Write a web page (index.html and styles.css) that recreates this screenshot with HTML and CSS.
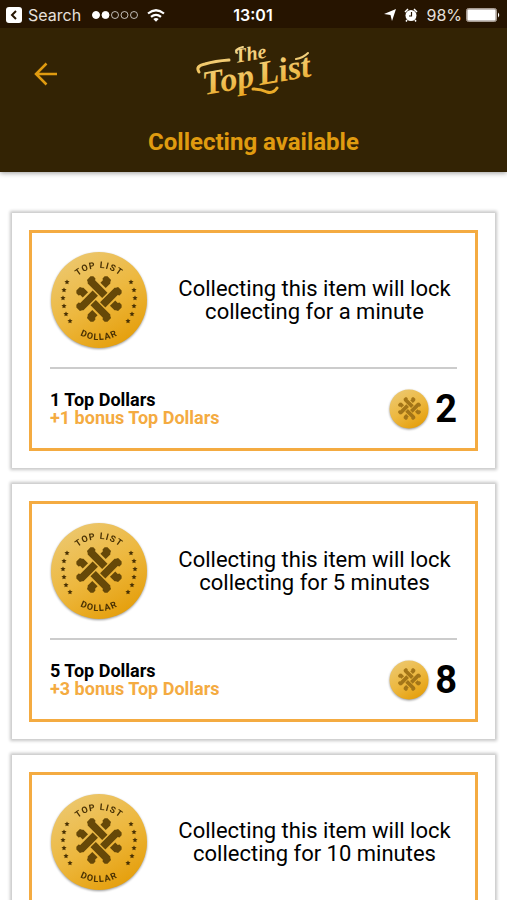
FILE: index.html
```html
<!DOCTYPE html>
<html lang="en">
<head>
    <meta charset="UTF-8">
    <meta name="viewport" content="width=device-width, initial-scale=1.0">
    <title>The Top List</title>
    <link rel="stylesheet" href="styles.css">
</head>
<body>
<!-- Shared coin artwork -->
<svg class="defs" width="0" height="0" aria-hidden="true">
    <defs>
        <linearGradient id="gold" x1="0.2" y1="0" x2="0.8" y2="1">
            <stop offset="0" stop-color="#ecc870"/>
            <stop offset="0.5" stop-color="#edb83f"/>
            <stop offset="1" stop-color="#e49c06"/>
        </linearGradient>
        <!-- One bar of the woven knot: long piece, gap, short end -->
        <path id="arm" d="M-22 -10 L-20 -12 L-17 -12 L-16 -10.500 H1.500 V-3 H-19 L-20 -4 L-22 -5 Z M12.500 -10.500 H16 L17 -12 L20 -12 L22 -10 L22 -5 L20 -4 L19 -3 H12.500 Z"/>
        <symbol id="knot" viewBox="-25 -25 50 50">
            <g transform="rotate(-45)">
                <use href="#arm"/>
                <use href="#arm" transform="rotate(90)"/>
                <use href="#arm" transform="rotate(180)"/>
                <use href="#arm" transform="rotate(270)"/>
            </g>
        </symbol>
        <path id="star" d="M0 -2.600 L0.800 -0.900 L2.600 -0.800 L1.200 0.500 L1.600 2.300 L0 1.400 L-1.600 2.300 L-1.200 0.500 L-2.600 -0.800 L-0.800 -0.900 Z"/>
        <path id="arc-top" d="M17 49 A32 32 0 0 1 81 49"/>
        <path id="arc-bottom" d="M9 49 A40 40 0 0 0 89 49"/>
        <symbol id="coin" viewBox="0 0 98 98">
            <circle cx="49" cy="49" r="48" fill="url(#gold)"/>
            <use href="#knot" x="24" y="23" width="50" height="50" fill="#664808"/>
            <text class="coin-text"><textPath href="#arc-top" startOffset="50%">TOP LIST</textPath></text>
            <text class="coin-text"><textPath href="#arc-bottom" startOffset="50%">DOLLAR</textPath></text>
            <g fill="#4a3204">
                <use href="#star" x="17" y="31"/><use href="#star" x="14" y="39"/><use href="#star" x="13" y="47"/>
                <use href="#star" x="14" y="55"/><use href="#star" x="16" y="63"/><use href="#star" x="20" y="70"/>
                <use href="#star" x="81" y="31"/><use href="#star" x="84" y="39"/><use href="#star" x="85" y="47"/>
                <use href="#star" x="84" y="55"/><use href="#star" x="82" y="63"/><use href="#star" x="78" y="70"/>
            </g>
        </symbol>
        <symbol id="coin-small" viewBox="0 0 40 40">
            <circle cx="20" cy="20" r="19.500" fill="url(#gold)"/>
            <use href="#knot" x="8" y="7" width="25" height="25" fill="#a37518"/>
        </symbol>
    </defs>
</svg>

<header class="header">
    <div class="status-bar">
        <div class="status-left">
            <svg width="16" height="16" viewBox="0 0 16 16"><rect width="16" height="16" rx="3" fill="#fff"/><path d="M10 4 L6 8 L10 12" fill="none" stroke="#261400" stroke-width="2"/></svg>
            <span>Search</span>
            <svg class="signal" width="46" height="8" viewBox="0 0 46 8" fill="none" stroke="#fff"><circle cx="4" cy="4" r="3.500" fill="#fff"/><circle cx="13.500" cy="4" r="3.500" fill="#fff"/><circle cx="23" cy="4" r="3.500" opacity=".7"/><circle cx="32.500" cy="4" r="3.500" opacity=".7"/><circle cx="42" cy="4" r="3.500" opacity=".7"/></svg>
            <svg width="18" height="13" viewBox="0 0 18 13" fill="none" stroke="#fff" stroke-width="2.200"><path d="M1 4.500 Q9 -2 17 4.500"/><path d="M4 7.900 Q9 3.700 14 7.900"/><path d="M6.300 10 Q9 8 11.700 10 L9 12.800 Z" fill="#fff" stroke="none"/></svg>
        </div>
        <span class="time">13:01</span>
        <div class="status-right">
            <svg width="12" height="12" viewBox="0 0 12 12" fill="#fff"><path d="M12 0 L8 12 L6.500 6 L0 5 Z"/></svg>
            <svg class="alarm" width="14" height="14" viewBox="0 0 14 14"><circle cx="7" cy="7.500" r="5.500" fill="#fff"/><path d="M1 4 L4 1 M10 1 L13 4 M3 12 L2 13.500 M11 12 L12 13.500" stroke="#fff" stroke-width="1.500"/><path d="M7.500 4 V8 H5" fill="none" stroke="#261400" stroke-width="1.200"/></svg>
            <span class="percent">98%</span>
            <svg width="34" height="14" viewBox="0 0 34 14"><rect x="0.500" y="0.500" width="30" height="13" rx="2" fill="#8d8078" stroke="#a89c92"/><rect x="1.500" y="1.500" width="28" height="11" rx="1" fill="#fff"/><path d="M32 4.500 Q34.500 7 32 9.500 Z" fill="#fff"/></svg>
        </div>
    </div>
    <nav class="nav">
        <a class="back" href="#" aria-label="Back">
            <svg width="24" height="24" viewBox="0 0 24 24" fill="none" stroke="#e09b10" stroke-width="2.500"><path d="M23 12 H2 M12.500 1.500 L2 12 L12.500 22.500"/></svg>
        </a>
        <svg class="logo" width="118" height="60" viewBox="0 0 118 60" role="img" aria-label="The Top List">
            <defs>
                <linearGradient id="logo-gold" gradientUnits="userSpaceOnUse" x1="0" y1="4" x2="0" y2="56">
                    <stop offset="0" stop-color="#f5d78e"/>
                    <stop offset="0.600" stop-color="#f0c25a"/>
                    <stop offset="1" stop-color="#e9a31a"/>
                </linearGradient>
            </defs>
            <g fill="url(#logo-gold)" transform="rotate(-10 59 30)">
                <text class="logo-the" x="42" y="20">The</text>
                <text class="logo-top" x="6" y="46">Top</text>
                <text class="logo-top" x="62" y="46">List</text>
            </g>
            <!-- Swashes -->
            <g fill="none" stroke="url(#logo-gold)" stroke-width="3" stroke-linecap="round">
                <path d="M4 32 Q0 26 10 24 Q20 21 34 20"/>
                <path d="M42 13 Q39 9 48 7" stroke-width="2"/>
                <path d="M58 49 Q66 49 72 52 Q78 54 82 48"/>
                <path d="M101 19 Q108 18 113 13" stroke-width="2"/>
            </g>
        </svg>
    </nav>
    <h1>Collecting available</h1>
</header>

<main class="list">
    <article class="card">
        <div class="card-inner">
            <div class="info">
                <svg class="coin"><use href="#coin"/></svg>
                <p>Collecting this item will lock collecting for a minute</p>
            </div>
            <div class="summary">
                <div class="reward">
                    <div>1 Top Dollars</div>
                    <div class="bonus">+1 bonus Top Dollars</div>
                </div>
                <div class="total">
                    <svg class="coin-small"><use href="#coin-small"/></svg>
                    <span>2</span>
                </div>
            </div>
        </div>
    </article>

    <article class="card">
        <div class="card-inner">
            <div class="info">
                <svg class="coin"><use href="#coin"/></svg>
                <p>Collecting this item will lock collecting for 5 minutes</p>
            </div>
            <div class="summary">
                <div class="reward">
                    <div>5 Top Dollars</div>
                    <div class="bonus">+3 bonus Top Dollars</div>
                </div>
                <div class="total">
                    <svg class="coin-small"><use href="#coin-small"/></svg>
                    <span>8</span>
                </div>
            </div>
        </div>
    </article>

    <article class="card">
        <div class="card-inner">
            <div class="info">
                <svg class="coin"><use href="#coin"/></svg>
                <p>Collecting this item will lock collecting for 10 minutes</p>
            </div>
        </div>
    </article>
</main>
</body>
</html>
```
FILE: styles.css
```css
:root {
    --gold: #e09b10;
    --orange: #f4ab41;
    --header-bg: #332304;
    --status-bg: #261400;
}

* {
    box-sizing: border-box;
}

body {
    margin: 0;
    font-family: Roboto, sans-serif;
    color: #000;
    background: #fff;
}

.defs {
    position: absolute;
}

/* Header */
.header {
    padding-bottom: 15px;
    background: var(--header-bg);
    box-shadow: 0 1px 5px rgba(0, 0, 0, 0.4);
}

.status-bar {
    display: grid;
    grid-template-columns: 1fr auto 1fr;
    align-items: center;
    height: 28px;
    padding: 2px 7px 0 6px;
    background: var(--status-bg);
    color: #e6e0dc;
    font-family: Inter, sans-serif;
    font-size: 16px;
}

.status-left, .status-right {
    display: flex;
    align-items: center;
    gap: 6px;
}

.status-right {
    justify-content: flex-end;
}

.alarm {
    margin: 0 2px;
}

.percent {
    margin-right: -2px;
}

.signal {
    margin: 0 3px 0 5px;
}

.time {
    font-weight: 600;
    color: #fff;
}

.nav {
    position: relative;
    display: flex;
    justify-content: center;
    padding-top: 12px;
}

.back {
    position: absolute;
    left: 34px;
    top: 34px;
}

.back svg, .logo {
    display: block;
}

.logo text {
    font-family: "Liberation Serif", serif;
    font-style: italic;
    font-weight: 700;
}

.logo .logo-the {
    font-size: 20px;
}

.logo .logo-top {
    font-size: 34px;
}

h1 {
    margin: 28px 0 0;
    text-align: center;
    font-size: 24px;
    line-height: 29px;
    font-weight: 700;
    color: var(--gold);
}

/* Cards */
.list {
    display: flex;
    flex-direction: column;
    gap: 16px;
    padding: 41px 12px 0;
}

.card {
    padding: 17px;
    background: #fff;
    box-shadow: 0 0 3px 2px rgba(0, 0, 0, 0.22);
}

.card-inner {
    padding: 18px;
    border: 3px solid var(--orange);
}

.info {
    display: flex;
    align-items: center;
    gap: 24px;
    padding-bottom: 18px;
    border-bottom: 2px solid #ccc;
}

.info p {
    flex: 1;
    margin: 0;
    text-align: center;
    font-size: 22px;
    line-height: 23px;
}

.coin {
    width: 98px;
    height: 98px;
    filter: drop-shadow(0 1px 1px rgba(0, 0, 0, 0.4));
}

.coin-text {
    font-family: Roboto, sans-serif;
    font-size: 9px;
    font-weight: 700;
    letter-spacing: 1px;
    text-anchor: middle;
    fill: #4a3204;
}

.summary {
    display: flex;
    justify-content: space-between;
    align-items: center;
    padding-top: 19px;
}

.reward {
    font-size: 18px;
    line-height: 18px;
    font-weight: 700;
}

.bonus {
    color: var(--orange);
}

.total {
    display: flex;
    align-items: center;
    gap: 6px;
    font-size: 38px;
    line-height: 42px;
    font-weight: 700;
}

.coin-small {
    width: 40px;
    height: 40px;
    filter: drop-shadow(0 1px 1px rgba(0, 0, 0, 0.4));
}
```
